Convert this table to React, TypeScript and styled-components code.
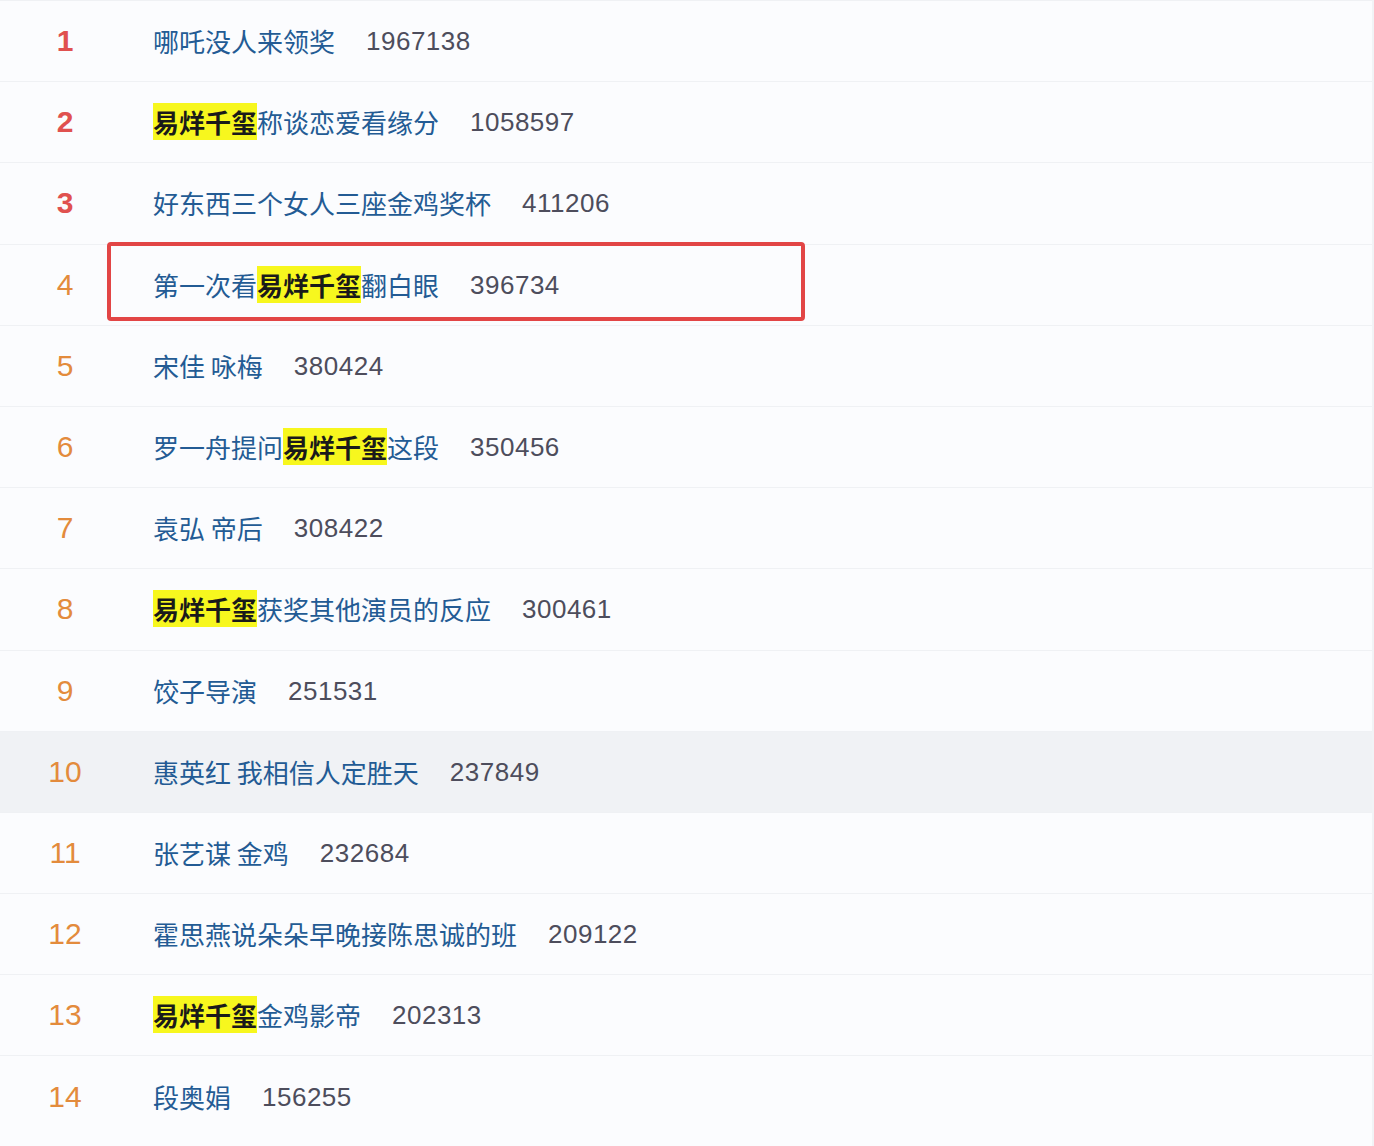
import React from "react";
import styled, { createGlobalStyle } from "styled-components";

const Global = createGlobalStyle`
  html, body { margin: 0; padding: 0; background: #fbfcfe; }
  body { font-family: "Noto Sans CJK SC", "Noto Sans", sans-serif; }
`;

const Page = styled.div`
  width: 1374px;
  height: 1146px;
  overflow: hidden;
  background: #fbfcfe;
  box-sizing: border-box;
  border-right: 2px solid #f1f3f6;
`;

const List = styled.div`
  display: flex;
  flex-direction: column;
`;

const Row = styled.div<{ $shaded?: boolean }>`
  position: relative;
  display: flex;
  align-items: center;
  height: 80.2px;
  border-top: 1px solid #eff1f4;
  background: ${(p) => (p.$shaded ? "#f0f2f5" : "transparent")};
`;

const Rank = styled.div<{ $top?: boolean }>`
  width: 130px;
  text-align: center;
  font-family: "Liberation Sans", Arial, sans-serif;
  font-size: 30px;
  font-weight: ${(p) => (p.$top ? 700 : 400)};
  color: ${(p) => (p.$top ? "#e0514f" : "#e38b3c")};
  line-height: 1;
`;

const Title = styled.div`
  margin-left: 23px;
  font-family: "Noto Sans CJK SC", "Noto Sans", sans-serif;
  font-size: 26px;
  color: #235b94;
  line-height: 30px;
  white-space: nowrap;
`;

const Mark = styled.span`
  background: #f7f71e;
  color: #1a1a1a;
  font-weight: 700;
`;

const Count = styled.div`
  margin-left: 31px;
  font-family: "Liberation Sans", Arial, sans-serif;
  font-size: 26px;
  color: #4d4d5c;
  letter-spacing: 0.5px;
  line-height: 30px;
`;

const Callout = styled.div`
  position: absolute;
  left: 107px;
  top: -3px;
  width: 698px;
  height: 79px;
  box-sizing: border-box;
  border: 4px solid #e24545;
  border-radius: 4px;
  pointer-events: none;
`;

type Item = { title: string; count: string };

const NAME = "易烊千玺";

const items: Item[] = [
  { title: "哪吒没人来领奖", count: "1967138" },
  { title: "易烊千玺称谈恋爱看缘分", count: "1058597" },
  { title: "好东西三个女人三座金鸡奖杯", count: "411206" },
  { title: "第一次看易烊千玺翻白眼", count: "396734" },
  { title: "宋佳 咏梅", count: "380424" },
  { title: "罗一舟提问易烊千玺这段", count: "350456" },
  { title: "袁弘 帝后", count: "308422" },
  { title: "易烊千玺获奖其他演员的反应", count: "300461" },
  { title: "饺子导演", count: "251531" },
  { title: "惠英红 我相信人定胜天", count: "237849" },
  { title: "张艺谋 金鸡", count: "232684" },
  { title: "霍思燕说朵朵早晚接陈思诚的班", count: "209122" },
  { title: "易烊千玺金鸡影帝", count: "202313" },
  { title: "段奥娟", count: "156255" },
];

function renderTitle(t: string) {
  const parts = t.split(NAME);
  const out: React.ReactNode[] = [];
  parts.forEach((p, i) => {
    if (i > 0) out.push(<Mark key={"m" + i}>{NAME}</Mark>);
    if (p) out.push(<React.Fragment key={"t" + i}>{p}</React.Fragment>);
  });
  return out;
}

export default function App() {
  return (
    <>
      <Global />
      <Page>
        <List>
          {items.map((it, i) => (
            <Row key={i} $shaded={i === 9}>
              <Rank $top={i < 3}>{i + 1}</Rank>
              <Title>{renderTitle(it.title)}</Title>
              <Count>{it.count}</Count>
              {i === 3 && <Callout />}
            </Row>
          ))}
        </List>
      </Page>
    </>
  );
}
